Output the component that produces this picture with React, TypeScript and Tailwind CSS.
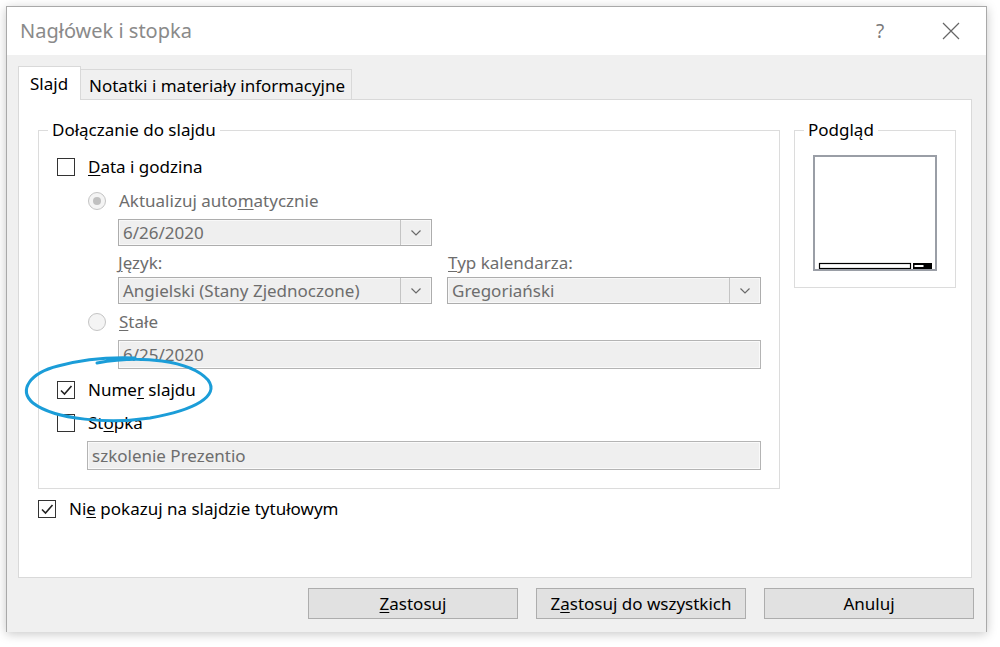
import React from "react";

const FONT = { fontFamily: '"Segoe UI", "Noto Sans", "Open Sans", sans-serif' };

function Check({ checked }: { checked?: boolean }) {
  return (
    <div className="w-[18px] h-[18px] border border-[#333333] bg-white flex items-center justify-center shrink-0">
      {checked && (
        <svg width="14" height="14" viewBox="0 0 14 14">
          <path d="M2 7.5 L5.5 11 L12.5 3" fill="none" stroke="#222" strokeWidth="1.6" />
        </svg>
      )}
    </div>
  );
}

function Radio({ selected }: { selected?: boolean }) {
  return (
    <div className="w-[18px] h-[18px] rounded-full border border-[#c4c4c4] bg-[#f4f4f4] flex items-center justify-center shrink-0">
      {selected && <div className="w-[8px] h-[8px] rounded-full bg-[#c0c0c0]" />}
    </div>
  );
}

function Chevron() {
  return (
    <svg width="12" height="8" viewBox="0 0 12 8">
      <path d="M1.5 1.5 L6 6 L10.5 1.5" fill="none" stroke="#6a6a6a" strokeWidth="1.2" />
    </svg>
  );
}

function Combo({ text, w }: { text: string; w: string }) {
  return (
    <div className={`${w} h-[27px] border border-[#adadad] bg-[#efefef] flex items-stretch shadow-[inset_0_0_0_1px_#f8f8f8]`}>
      <div className="flex-1 flex items-center pl-[4px] text-[#6d6d6d] leading-none">{text}</div>
      <div className="w-[31px] border-l border-[#c4c4c4] flex items-center justify-center">
        <Chevron />
      </div>
    </div>
  );
}

function TextBox({ text, w }: { text: string; w: string }) {
  return (
    <div className={`${w} h-[29px] border border-[#b4b4b4] bg-[#efefef] flex items-center pl-[4px] text-[#6d6d6d] shadow-[inset_0_0_0_1px_#fafafa]`}>
      {text}
    </div>
  );
}

function Btn({ children }: { children: React.ReactNode }) {
  return (
    <div className="w-[210px] h-[31px] border border-[#adadad] bg-[#e1e1e1] flex items-center justify-center text-black text-[17px]">
      {children}
    </div>
  );
}

export default function App() {
  return (
    <div className="relative w-[1000px] h-[647px] bg-white overflow-hidden text-[17px]" style={FONT}>
      <div className="ml-[6px] mt-[6px] w-[981px] h-[626px] border border-[#a9a9a9] shadow-[0_2px_10px_rgba(0,0,0,0.22)] flex flex-col">
        {/* title bar */}
        <div className="h-[48px] bg-white flex items-center pl-[13px] shrink-0">
          <div className="text-[20px] text-[#8a8a8a] flex-1">Nagłówek i stopka</div>
          <div className="text-[19px] text-[#7a7a7a] w-[20px] text-center mr-[52px]">?</div>
          <svg width="18" height="18" viewBox="0 0 18 18" className="mr-[26px]">
            <path d="M1 1 L17 17 M17 1 L1 17" stroke="#666" strokeWidth="1.2" />
          </svg>
        </div>
        {/* body */}
        <div className="flex-1 bg-[#f0f0f0] pl-[11px] pr-[14px] pt-[10px] pb-[13px] flex flex-col">
          {/* tabs */}
          <div className="h-[34px] flex items-end shrink-0">
            <div className="relative z-10 w-[63px] h-[34px] mb-[-1px] bg-white border-t border-l border-r border-[#d9d9d9] pl-[11px] pt-[4px] text-black">
              Slajd
            </div>
            <div className="w-[271px] h-[30px] bg-[#f0f0f0] border-t border-r border-[#d9d9d9] pl-[8px] pt-[3px] text-black">
              Notatki i materiały informacyjne
            </div>
          </div>
          {/* panel */}
          <div className="h-[479px] bg-white border border-[#d9d9d9] pl-[19px] pt-[20px] flex flex-col">
            <div className="flex gap-[14px]">
              <fieldset className="w-[742px] h-[369px] border border-[#dcdcdc] pl-[18px] pr-0 pb-0 pt-0 m-0">
                <legend className="ml-[-9px] px-[4px] leading-[20px] text-black">Dołączanie do slajdu</legend>
                <div className="flex flex-col">
                  <div className="mt-[15px] h-[24px] flex items-center gap-[13px]">
                    <Check />
                    <span className="text-black"><span className="underline underline-offset-2">D</span>ata i godzina</span>
                  </div>
                  <div className="mt-[10px] h-[24px] ml-[31px] flex items-center gap-[13px]">
                    <Radio selected />
                    <span className="text-[#6d6d6d]">Aktualizuj auto<span className="underline underline-offset-2">m</span>atycznie</span>
                  </div>
                  <div className="mt-[6px] ml-[61px]">
                    <Combo text="6/26/2020" w="w-[314px]" />
                  </div>
                  <div className="mt-[7px] ml-[61px] h-[20px] flex items-center text-[#6d6d6d]">
                    <span className="w-[330px]"><span className="underline underline-offset-2">J</span>ęzyk:</span>
                    <span><span className="underline underline-offset-2">T</span>yp kalendarza:</span>
                  </div>
                  <div className="mt-[4px] ml-[61px] flex gap-[15px]">
                    <Combo text="Angielski (Stany Zjednoczone)" w="w-[314px]" />
                    <Combo text="Gregoriański" w="w-[314px]" />
                  </div>
                  <div className="mt-[6px] h-[24px] ml-[31px] flex items-center gap-[13px]">
                    <Radio />
                    <span className="text-[#6d6d6d]"><span className="underline underline-offset-2">S</span>tałe</span>
                  </div>
                  <div className="mt-[6px] ml-[61px]">
                    <TextBox text="6/25/2020" w="w-[643px]" />
                  </div>
                  <div className="mt-[9px] h-[24px] flex items-center gap-[13px]">
                    <Check checked />
                    <span className="text-black">Nume<span className="underline underline-offset-2">r</span> slajdu</span>
                  </div>
                  <div className="mt-[9px] h-[24px] flex items-center gap-[13px]">
                    <Check />
                    <span className="text-black">St<span className="underline underline-offset-2">o</span>pka</span>
                  </div>
                  <div className="mt-[6px] ml-[30px]">
                    <TextBox text="szkolenie Prezentio" w="w-[674px]" />
                  </div>
                </div>
              </fieldset>
              <fieldset className="w-[162px] h-[168px] border border-[#dcdcdc] pl-[18px] pr-0 pb-0 pt-0 m-0">
                <legend className="ml-[-9px] px-[4px] leading-[20px] text-black">Podgląd</legend>
                <div className="mt-[15px] w-[124px] h-[116px] border-2 border-[#9a9ea6] bg-white">
                  <svg width="120" height="112" viewBox="0 0 120 112">
                    <rect x="4.5" y="106.5" width="91" height="5" fill="white" stroke="#000" strokeWidth="1.2" />
                    <rect x="98" y="106" width="19" height="6" fill="#000" />
                    <rect x="99.5" y="108" width="9" height="2" fill="#fff" />
                  </svg>
                </div>
              </fieldset>
            </div>
            <div className="mt-[8px] h-[24px] flex items-center gap-[13px]">
              <Check checked />
              <span className="text-black">Ni<span className="underline underline-offset-2">e</span> pokazuj na slajdzie tytułowym</span>
            </div>
          </div>
          {/* buttons */}
          <div className="mt-[10px] mr-[-2px] flex justify-end gap-[18px]">
            <Btn><span><span className="underline underline-offset-2">Z</span>astosuj</span></Btn>
            <Btn><span>Z<span className="underline underline-offset-2">a</span>stosuj do wszystkich</span></Btn>
            <Btn>Anuluj</Btn>
          </div>
        </div>
      </div>
      {/* annotation ellipse */}
      <svg className="absolute inset-0 pointer-events-none" width="1000" height="647" viewBox="0 0 1000 647">
        <path
          d="M97 363 C 140 355, 190 360, 208 380 C 220 396, 195 410, 150 418 C 110 424, 55 420, 33 403 C 18 390, 30 373, 58 366 C 80 360, 110 357, 135 358"
          fill="none"
          stroke="#1b9dd8"
          strokeWidth="3"
          strokeLinecap="round"
        />
      </svg>
    </div>
  );
}
